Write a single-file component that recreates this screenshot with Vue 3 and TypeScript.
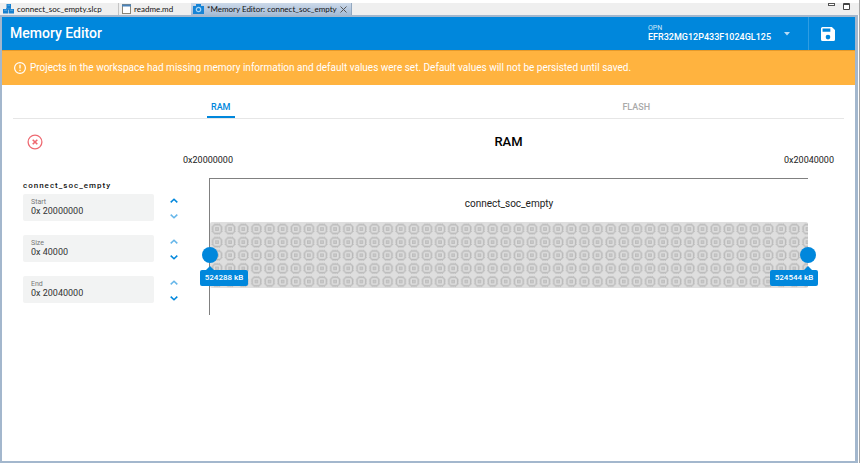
<script setup lang="ts">
import { ref } from 'vue'

interface Field {
  id: string
  label: string
  value: string
  canRaise: boolean
  canLower: boolean
}

const parts = ['EFR32MG12P433F1024GL125']
const part = ref(parts[0])
const activeTab = ref('RAM')
const tabs = ['RAM', 'FLASH']

const fields = ref<Field[]>([
  { id: 'start', label: 'Start', value: '0x 20000000', canRaise: true, canLower: false },
  { id: 'size', label: 'Size', value: '0x 40000', canRaise: false, canLower: true },
  { id: 'end', label: 'End', value: '0x 20040000', canRaise: false, canLower: true },
])

const lower = ref(524288)
const upper = ref(524544)
</script>

<template>
  <div class="window">
    <nav class="editor-tabs">
      <a class="editor-tab first" href="#">
        <svg width="11" height="10" viewBox="0 0 11 10">
          <path d="M3.500 0h4.500v4.500H3.500zM0 5h5.200v4.500H0zM5.800 5H11v4.500H5.800z" fill="#1780cf" />
          <path d="M3 5h5" stroke="#1780cf" stroke-width="1.500" />
          <path d="M4.500 1.200h2.500M1 6.200h3M7 6.200h3" stroke="#6bb6ea" stroke-width="0.800" />
        </svg>
        <span>connect_soc_empty.slcp</span>
      </a>
      <a class="editor-tab second" href="#">
        <svg width="9" height="10" viewBox="0 0 9 10">
          <rect x="0.500" y="0.500" width="8" height="9" fill="#fff" stroke="#8a8577" />
          <path d="M0 1.500h9" stroke="#4a83ba" stroke-width="2" />
        </svg>
        <span>readme.md</span>
      </a>
      <a class="editor-tab current" href="#">
        <svg width="11" height="10" viewBox="0 0 11 10">
          <path d="M3 0h5v2h3v8H0V2h3z" fill="#1684d6" />
          <circle cx="5.500" cy="5.500" r="2.200" fill="#1684d6" stroke="#a6d7f8" stroke-width="1.200" />
        </svg>
        <span>*Memory Editor: connect_soc_empty</span>
        <svg class="close" width="7" height="7" viewBox="0 0 7 7">
          <path d="M0.500 0.500l6 6M6.500 0.500l-6 6" stroke="#555" fill="none" />
        </svg>
      </a>
      <span class="window-buttons">
        <button type="button" aria-label="Minimize">
          <svg width="7" height="8" viewBox="0 0 7 8"><rect x="0.500" y="0.500" width="6" height="2" fill="#fff" stroke="#555" /></svg>
        </button>
        <button type="button" aria-label="Maximize">
          <svg width="7" height="8" viewBox="0 0 7 8"><path d="M0.500 0.500h6v6h-6zM0 1.500h7" fill="#fff" stroke="#444" /></svg>
        </button>
      </span>
    </nav>

    <main class="editor">
      <header class="app-bar">
        <h1>Memory Editor</h1>
        <div class="part">
          <label for="opn">OPN</label>
          <select id="opn" v-model="part">
            <option v-for="p in parts" :key="p">{{ p }}</option>
          </select>
          <svg class="caret" width="6" height="4" viewBox="0 0 6 4"><path d="M0 0h6L3 3.500z" fill="#b9dcf5" /></svg>
        </div>
        <button class="save" type="button" aria-label="Save">
          <svg width="14" height="14" viewBox="3 3 18 18">
            <path d="M17 3H5a2 2 0 0 0-2 2v14a2 2 0 0 0 2 2h14a2 2 0 0 0 2-2V7l-4-4zm-5 16a3 3 0 1 1 0-6 3 3 0 0 1 0 6zm3-10H5V5h10v4z" fill="#fff" />
          </svg>
        </button>
      </header>

      <div class="banner" role="alert">
        <svg width="12" height="12" viewBox="0 0 12 12">
          <circle cx="6" cy="6" r="5.400" fill="none" stroke="#fff" stroke-width="1.200" />
          <path d="M6 2.800v3.700M6 7.800v1.300" stroke="#fff" stroke-width="1.300" />
        </svg>
        <span>Projects in the workspace had missing memory information and default values were set. Default values will not be persisted until saved.</span>
      </div>

      <section class="content">
        <div class="memory-tabs" role="tablist">
          <div v-for="t in tabs" :key="t" class="memory-tab">
            <button type="button" role="tab" :aria-selected="activeTab === t" :class="{ active: activeTab === t }" @click="activeTab = t">{{ t }}</button>
          </div>
        </div>

        <div class="memory">
          <aside class="settings">
            <button class="clear" type="button" aria-label="Discard">
              <svg width="16" height="16" viewBox="0 0 16 16" fill="none" stroke="#ee6a72">
                <circle cx="8" cy="8" r="6.900" stroke-width="1.300" />
                <path d="M5.700 5.700l4.600 4.600M10.300 5.700l-4.600 4.600" stroke-width="1.600" />
              </svg>
            </button>
            <h2>connect_soc_empty</h2>
            <div v-for="f in fields" :key="f.id" class="field-row">
              <div class="field">
                <label :for="f.id">{{ f.label }}</label>
                <input :id="f.id" v-model="f.value" type="text" />
              </div>
              <div class="steps">
                <button type="button" :aria-label="`Increase ${f.label}`" :disabled="!f.canRaise">
                  <svg width="8" height="5" viewBox="0 0 8 5"><path d="M0.700 4.400L4 1.200l3.300 3.200" /></svg>
                </button>
                <button type="button" :aria-label="`Decrease ${f.label}`" :disabled="!f.canLower">
                  <svg width="8" height="5" viewBox="0 0 8 5"><path d="M0.700 0.600L4 3.800l3.300-3.200" /></svg>
                </button>
              </div>
            </div>
          </aside>

          <div class="map">
            <h2>RAM</h2>
            <div class="addresses">
              <span>0x20000000</span>
              <span>0x20040000</span>
            </div>
            <div class="chart">
              <p>connect_soc_empty</p>
              <div class="region">
                <svg class="chips" width="100%" height="66">
                  <defs>
                    <pattern id="chip" width="13.120" height="13.120" patternUnits="userSpaceOnUse" x="0.500" y="0.500">
                      <g fill="none" stroke="#b9b9b9">
                        <rect x="2.500" y="2.500" width="8.200" height="8.200" rx="2.300" stroke-width="1.100" />
                        <rect x="5.200" y="5.200" width="2.800" height="2.800" fill="#c9c9c9" stroke-width="0.800" />
                        <path d="M4.600 1v1.400M6.600 1v1.400M8.600 1v1.400M4.600 10.800v1.400M6.600 10.800v1.400M8.600 10.800v1.400M1 4.600h1.400M1 6.600h1.400M1 8.600h1.400M10.800 4.600h1.400M10.800 6.600h1.400M10.800 8.600h1.400" />
                      </g>
                    </pattern>
                  </defs>
                  <rect width="100%" height="66" rx="2" fill="#dedede" />
                  <rect width="100%" height="66" fill="url(#chip)" />
                </svg>
                <input v-model.number="lower" class="slider" type="range" min="524288" max="524544" aria-label="Region start" />
                <input v-model.number="upper" class="slider" type="range" min="524288" max="524544" aria-label="Region end" />
                <output class="tip tip-start">{{ lower }} kB</output>
                <output class="tip tip-end">{{ upper }} kB</output>
              </div>
            </div>
          </div>
        </div>
      </section>
    </main>
  </div>
</template>

<style>
body {
  background: #fff;
}
</style>

<style scoped>
* {
  box-sizing: border-box;
}

.window {
  display: flex;
  flex-direction: column;
  min-height: 100vh;
  padding-top: 3px;
  border-right: 1px solid #a5a5a5;
  font-family: Roboto, "Liberation Sans", sans-serif;
  color: #222;
}

h1,
h2,
p {
  margin: 0;
}

button {
  display: flex;
  padding: 0;
  border: 0;
  background: none;
  font: inherit;
  color: inherit;
}

.editor-tabs {
  display: flex;
  height: 12px;
  background: #efefef;
  font: 8px/10px Lato, "Open Sans", sans-serif;
}

.editor-tab {
  display: flex;
  align-items: center;
  gap: 3px;
  white-space: nowrap;
  color: #111;
  text-decoration: none;
}

.editor-tab svg {
  flex: none;
}

.first {
  width: 119px;
  padding-left: 3px;
  border-right: 1px solid #c4c4c4;
}

.second {
  width: 72px;
  padding-left: 3px;
}

.current {
  width: 161px;
  padding-left: 2px;
  padding-right: 4px;
  border-right: 1px solid #93a8c0;
  background: linear-gradient(#ccd9e9, #a6bcd6);
}

.close {
  margin-left: auto;
}

.window-buttons {
  display: flex;
  gap: 8px;
  margin-left: auto;
  padding-right: 9px;
}

.editor {
  flex: 1;
  border: solid #a3b7cd;
  border-width: 2px 3px 2px 2px;
  margin-right: 1px;
  background: #fff;
}

.app-bar {
  display: flex;
  height: 33px;
  background: #0087dc;
  color: #fff;
}

.app-bar h1 {
  flex: 1;
  padding-left: 8px;
  font-size: 14px;
  font-weight: 500;
  line-height: 33px;
}

.part {
  display: grid;
  grid-template-columns: 136px 6px;
  align-content: center;
  padding-right: 18px;
}

.part label {
  grid-column: 1 / -1;
  font-size: 7px;
  line-height: 7px;
  color: #cfe8f9;
}

.part select {
  appearance: none;
  padding: 0;
  border: 0;
  background: none;
  font: 500 9px/11px Roboto, sans-serif;
  color: #fff;
}

.save {
  align-items: center;
  justify-content: center;
  width: 47px;
  padding-right: 8px;
  border-left: 1px solid #2e9de3;
}

.banner {
  display: flex;
  align-items: center;
  gap: 4px;
  height: 35px;
  padding-left: 12px;
  border-top: 1px solid #e59a2b;
  background: #ffb33f;
  font-size: 10px;
  line-height: 12px;
  color: #fff;
}

.content {
  padding: 7px 11px 0;
}

.memory-tabs {
  display: grid;
  grid-template-columns: 1fr 1fr;
  border-bottom: 1px solid #e6e6e6;
}

.memory-tab {
  display: flex;
  justify-content: center;
}

.memory-tab button {
  padding: 10px 4px 3px;
  border-bottom: 2px solid transparent;
  font-size: 9px;
  font-weight: 500;
  line-height: 11px;
  color: #aaa;
}

.memory-tab button.active {
  border-color: #0087dc;
  color: #0087dc;
}

.memory {
  display: grid;
  grid-template-columns: 158px 1fr;
  gap: 28px;
  padding: 15px 36px 0 10px;
}

.clear {
  margin: 0 0 30px 4px;
}

.settings h2 {
  margin-bottom: 3px;
  font-size: 8px;
  font-weight: 500;
  letter-spacing: 1px;
  line-height: 11px;
  color: #111;
}

.field-row {
  display: flex;
  gap: 13px;
  margin-bottom: 14px;
}

.field {
  display: flex;
  flex: 1;
  flex-direction: column;
  height: 27px;
  padding: 4px 8px;
  border-radius: 2px;
  background: #f2f3f3;
}

.field label {
  font-size: 7px;
  line-height: 8px;
  color: #777;
}

.field input {
  width: 100%;
  height: 11px;
  padding: 0;
  border: 0;
  background: none;
  font: 9px/11px Roboto, sans-serif;
  color: #333;
}

.steps {
  display: flex;
  flex-direction: column;
  justify-content: space-between;
  width: 14px;
  padding: 4px 3px 2px;
}

.steps path {
  fill: none;
  stroke: #0087dc;
  stroke-width: 1.5;
}

.steps button:disabled {
  opacity: 0.6;
}

.map h2 {
  font-size: 13px;
  font-weight: 500;
  line-height: 16px;
  text-align: center;
  color: #000;
}

.addresses {
  display: flex;
  justify-content: space-between;
  margin: 4px -26px 12px;
  font-size: 9px;
  line-height: 12px;
}

.chart {
  padding-bottom: 27px;
  border: solid #808080;
  border-width: 1px 0 0 1px;
}

.chart p {
  padding: 19px 0 12px;
  font-size: 10px;
  line-height: 12px;
  text-align: center;
}

.region {
  position: relative;
}

.chips {
  display: block;
}

.slider {
  position: absolute;
  top: 25px;
  left: -8px;
  width: calc(100% + 16px);
  height: 16px;
  margin: 0;
  appearance: none;
  background: none;
  pointer-events: none;
}

.slider::-webkit-slider-thumb {
  width: 16px;
  height: 16px;
  appearance: none;
  border-radius: 50%;
  background: #0087dc;
  pointer-events: auto;
}

.tip {
  position: absolute;
  top: 48px;
  width: 48px;
  border-radius: 2px;
  background: #0087dc;
  font-size: 8px;
  font-weight: 500;
  line-height: 16px;
  text-align: center;
  color: #fff;
}

.tip::before {
  position: absolute;
  top: -4px;
  left: 6px;
  border: solid transparent;
  border-width: 0 4px 4px;
  border-bottom-color: #0087dc;
  content: "";
}

.tip-start {
  left: -10px;
}

.tip-end {
  right: -10px;
}

.tip-end::before {
  right: 6px;
  left: auto;
}
</style>
